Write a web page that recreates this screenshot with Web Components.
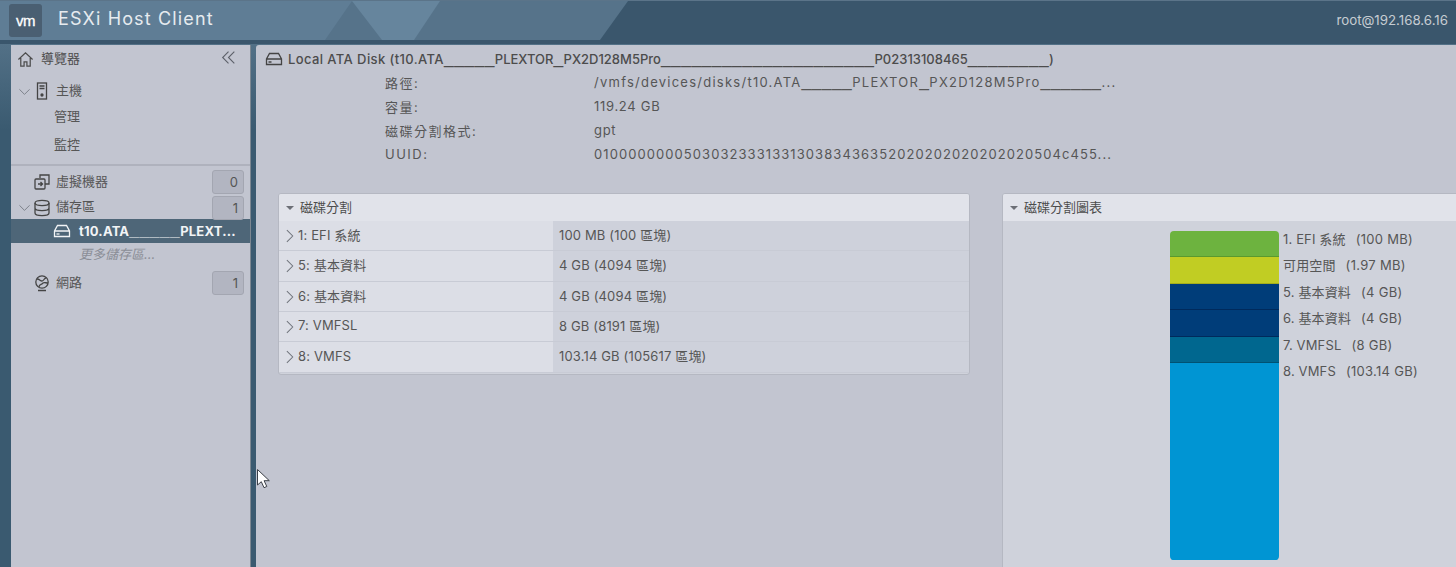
<!DOCTYPE html>
<html lang="zh-Hant">

<head>
  <meta charset="UTF-8">
  <title>ESXi Host Client</title>
  <style>
    html, body { margin: 0; height: 100%; overflow: hidden; background: #3a566c; }
    body { font-family: Inter, "Noto Sans CJK TC", sans-serif; font-size: 13px; color: #565656; }
  </style>
</head>

<body>
  <esxi-app>
    <esxi-header slot="header" user="root@192.168.6.16"></esxi-header>
    <esxi-navigator slot="nav"></esxi-navigator>
    <esxi-disk-view slot="main"></esxi-disk-view>
  </esxi-app>

  <script>
    const icons = {
      home: '<path d="M1.5 9 9 2l7.5 7M4 7.5V16h3.5v-4.5h3V16H14V7.5" />',
      host: '<rect x="4.5" y="1" width="9" height="16" /><path d="M6.5 4h5M6.5 6.5h5" /><circle cx="9" cy="13" r="1" fill="currentColor" />',
      vm: '<path d="M7 5V2h9v9h-4" /><rect x="2" y="6" width="10" height="10" rx="1" /><path d="M5 11h4M7.5 9l2 2-2 2" />',
      store: '<ellipse cx="9" cy="4" rx="7" ry="2.6" /><path d="M2 4v10c0 1.5 3 2.6 7 2.6s7-1.1 7-2.6V4M2 9c0 1.5 3 2.6 7 2.6s7-1.1 7-2.6" />',
      net: '<circle cx="9" cy="8" r="6.2" /><path d="M4 5c3 0 3 2 5 2s2-3 4-3M6 13c0-3 3-2 4-4 1-1 3 0 5 0M5 16.5h8" />',
      disk: '<path d="M4.5 3.5h9L16.5 9v5.5h-15V9zM1.500 9h15" /><path d="M3.500 12h3" />',
      chevDown: '<path d="M2 6l7 7 7-7" />',
      chevRight: '<path d="M5 1.500 12.500 9 5 16.500" />',
      collapse: '<path d="M9 2 2 9l7 7M16 2 9 9l7 7" />'
    };

    // the reference font draws "_" much wider than Inter does
    const wide = (text) => text.replace(/_+/g, (m) => `<span class="us">${m}</span>`);
    const wideCss = '.us { font-family: "Liberation Sans", sans-serif; font-size: 17.400px; line-height: 0; letter-spacing: .5px; }';

    class EsxiIcon extends HTMLElement {
      connectedCallback() {
        const size = this.getAttribute('size') || 18;
        const root = this.attachShadow({ mode: 'open' });
        root.innerHTML = `
          <style>
            :host { display: inline-flex; flex: none; width: ${size}px; height: ${size}px; color: inherit; }
            svg { width: 100%; height: 100%; fill: none; stroke: currentColor; stroke-width: 1.3; }
          </style>
          <svg viewBox="0 0 18 18">${icons[this.getAttribute('name')] || ''}</svg>`;
      }
    }
    customElements.define('esxi-icon', EsxiIcon);

    class EsxiApp extends HTMLElement {
      constructor() {
        super();
        this.attachShadow({ mode: 'open' }).innerHTML = `
          <style>
            :host {
              display: grid;
              position: relative;
              width: 1456px;
              height: 567px;
              overflow: hidden;
              grid-template-columns: 11px 240px 1fr;
              grid-template-rows: 44px 1fr;
              background: linear-gradient(180deg, #5f7c92 0, #3a5a70 130px);
            }
            .head { grid-column: 1 / -1; }
            .nav { grid-column: 2; }
            .main { grid-column: 3; margin-left: 5px; min-width: 0; }
            .cursor { position: absolute; left: 257px; top: 469px; width: 15px; height: 22px; }
          </style>
          <div class="head"><slot name="header"></slot></div>
          <div class="nav"><slot name="nav"></slot></div>
          <div class="main"><slot name="main"></slot></div>
          <svg class="cursor" viewBox="0 0 15 22">
            <path d="M.5.500v15.500l3.800-3.300 2.700 6 2.800-1.200-2.700-5.800h5.200z" fill="#fff" stroke="#3a3f46" stroke-width="1" />
          </svg>`;
      }
    }
    customElements.define('esxi-app', EsxiApp);

    class EsxiHeader extends HTMLElement {
      connectedCallback() {
        this.attachShadow({ mode: 'open' }).innerHTML = `
          <style>
            :host {
              display: flex;
              position: relative;
              align-items: center;
              height: 44px;
              box-sizing: border-box;
              padding: 0 8px 0 9px;
              background: #3a566c;
              border-top: 1px solid #5b7489;
              overflow: hidden;
            }
            .deco { position: absolute; left: 0; top: 0; width: 640px; height: 44px; }
            .logo {
              position: relative;
              width: 33px; height: 33px;
              margin-top: -5px;
              display: flex; align-items: center; justify-content: center;
              background: #4a5f72;
              border-radius: 3px;
              color: #fff;
              font: 400 15px/1 "Liberation Sans", sans-serif;
              letter-spacing: -0.5px;
              -webkit-text-stroke: 0.3px #fff;
            }
            .title {
              position: relative;
              margin: -8px 0 0 16px;
              color: #e6ebef;
              font: 400 18px/1 Inter, sans-serif;
              letter-spacing: 1.15px;
            }
            .user { position: relative; margin: -6px 0 0 auto; color: #c6ccd2; font-size: 13.300px; }
          </style>
          <svg class="deco" viewBox="0 0 640 44">
            <polygon points="0,0 628,0 600,39 0,39" fill="#56738a" />
            <polygon points="0,0 352,0 325,39 0,39" fill="#5f7d95" />
            <polygon points="352,0 440,0 414,39 382,39" fill="#66859d" />
          </svg>
          <div class="logo">vm</div>
          <div class="title">ESXi Host Client</div>
          <div class="user">${this.getAttribute('user')}</div>`;
      }
    }
    customElements.define('esxi-header', EsxiHeader);

    class NavRow extends HTMLElement {
      connectedCallback() {
        const expand = this.hasAttribute('expand');
        const icon = this.getAttribute('icon');
        const count = this.getAttribute('count');
        this.attachShadow({ mode: 'open' }).innerHTML = `
          <style>
            :host {
              display: flex;
              align-items: center;
              height: 24px;
              padding-left: 7px;
              padding-right: 6px;
              color: #565656;
              font-size: 13px;
            }
            .arrow { width: 15px; flex: none; display: flex; color: #777d85; }
            .icon { margin-right: 5px; display: flex; color: #444; }
            .label { flex: 1; white-space: nowrap; padding-bottom: 4px; }
            .count {
              width: 32px; height: 24px; box-sizing: border-box;
              padding-right: 5px;
              display: flex; align-items: center; justify-content: flex-end;
              background: #b2b5c1;
              border: 1px solid #a3a6b1;
              border-radius: 3px;
              color: #555;
              font-size: 13px;
            }
          </style>
          <span class="arrow">${expand ? '<esxi-icon name="chevDown" size="13"></esxi-icon>' : ''}</span>
          ${icon ? `<span class="icon"><esxi-icon name="${icon}" size="18"></esxi-icon></span>` : ''}
          <span class="label"><slot></slot></span>
          ${count !== null ? `<span class="count">${count}</span>` : ''}`;
      }
    }
    customElements.define('nav-row', NavRow);

    class EsxiNavigator extends HTMLElement {
      connectedCallback() {
        this.attachShadow({ mode: 'open' }).innerHTML = `
          <style>
            :host {
              display: block;
              height: 100%;
              margin-top: 1px;
              background: #c2c5d0;
              border-right: 1px solid #7c8791;
              font-size: 13px;
            }
            .top {
              display: flex; align-items: center;
              height: 28px;
              padding: 0 14px 0 6px;
              color: #4c4c4c;
            }
            .top span { flex: 1; margin-left: 7px; padding-bottom: 4px; }
            .top .side { color: #5c6069; flex: none; margin-top: -3px; }
            nav-row.first { margin-top: 6px; }
            .sub { height: 24px; line-height: 24px; padding-left: 43px; color: #565656; }
            .sub.last { margin-top: 4px; }
            hr { margin: 8px 0 4px; border: 0; height: 2px; background: #afb2bd; }
            .selected {
              display: flex; align-items: center;
              height: 24px;
              padding-left: 42px;
              background: #4e6678;
              color: #f2f4f6;
              font-weight: 700;
            }
            .selected > span { margin-left: 8px; white-space: nowrap; padding-bottom: 1px; letter-spacing: .2px; }
            ${wideCss}
            .more { height: 23px; line-height: 23px; padding-left: 68px; color: #8b8e97; font-style: italic; }
            .net { margin-top: 5px; }
            .gap { margin-top: 2px; }
          </style>
          <div class="top">
            <esxi-icon name="home" size="17"></esxi-icon><span>導覽器</span>
            <esxi-icon class="side" name="collapse" size="15"></esxi-icon>
          </div>
          <nav-row class="first" expand icon="host">主機</nav-row>
          <div class="sub" style="margin-top:1px">管理</div>
          <div class="sub last">監控</div>
          <hr>
          <nav-row icon="vm" count="0">虛擬機器</nav-row>
          <nav-row class="gap" expand icon="store" count="1" style="height:23px">儲存區</nav-row>
          <div class="selected"><esxi-icon name="disk" size="18"></esxi-icon><span>${wide('t10.ATA_____PLEXT...')}</span></div>
          <div class="more">更多儲存區...</div>
          <nav-row class="net" icon="net" count="1">網路</nav-row>`;
      }
    }
    customElements.define('esxi-navigator', EsxiNavigator);

    class EsxiPortlet extends HTMLElement {
      connectedCallback() {
        this.attachShadow({ mode: 'open' }).innerHTML = `
          <style>
            :host {
              display: block;
              box-sizing: border-box;
              background: #cfd2db;
              border: 1px solid #b5b8c2;
              border-radius: 3px;
              overflow: hidden;
            }
            .bar {
              display: flex; align-items: center;
              height: 27px;
              padding-left: 7px;
              background: #e1e3ea;
              color: #4c4c4c;
            }
            .bar span:last-child { padding-bottom: 3px; }
            .tri { width: 0; height: 0; margin-right: 6px; border: 4px solid transparent; border-top: 4px solid #6c6f76; border-bottom: 0; }
          </style>
          <div class="bar"><span class="tri"></span><span>${this.getAttribute('heading')}</span></div>
          <slot></slot>`;
      }
    }
    customElements.define('esxi-portlet', EsxiPortlet);

    class PartitionTable extends HTMLElement {
      connectedCallback() {
        const rows = [
          ['1: EFI 系統', '100 MB (100 區塊)', 30],
          ['5: 基本資料', '4 GB (4094 區塊)', 31],
          ['6: 基本資料', '4 GB (4094 區塊)', 30],
          ['7: VMFSL', '8 GB (8191 區塊)', 30],
          ['8: VMFS', '103.14 GB (105617 區塊)', 31]
        ];
        this.attachShadow({ mode: 'open' }).innerHTML = `
          <style>
            :host { display: block; }
            .row {
              display: grid;
              grid-template-columns: 274px 1fr;
              box-sizing: border-box;
              border-bottom: 1px solid #c8cbd5;
            }
            .row:last-child { margin-bottom: 1px; }
            .a, .b { display: flex; align-items: center; }
            .a { background: #dcdee6; padding-left: 4px; color: #565656; }
            .a esxi-icon { color: #70747c; margin-right: 1px; }
            .a span, .b span { padding-bottom: 3px; letter-spacing: .15px; }
            .b { background: #ced1db; padding-left: 6px; }
          </style>
          ${rows.map(([name, size, h]) => `
            <div class="row" style="height:${h}px">
              <div class="a"><esxi-icon name="chevRight" size="14"></esxi-icon><span>${name}</span></div>
              <div class="b"><span>${size}</span></div>
            </div>`).join('')}`;
      }
    }
    customElements.define('partition-table', PartitionTable);

    class PartitionChart extends HTMLElement {
      connectedCallback() {
        const parts = [
          ['1. EFI 系統', '(100 MB)', '#6db33f', '#5a9a2e', 26.4],
          ['可用空間', '(1.97 MB)', '#c1cd23', '#a5ae1c', 26.4],
          ['5. 基本資料', '(4 GB)', '#003d79', '#002a5c', 26.4],
          ['6. 基本資料', '(4 GB)', '#003d79', '#002a5c', 26.4],
          ['7. VMFSL', '(8 GB)', '#00678f', '#005273', 26.4],
          ['8. VMFS', '(103.14 GB)', '#0095d3', '#0095d3', 197]
        ];
        this.attachShadow({ mode: 'open' }).innerHTML = `
          <style>
            :host { display: flex; align-items: flex-start; padding: 10px 0 0 167px; height: 350px; box-sizing: border-box; }
            .bar { width: 109px; flex: none; border-radius: 4px; overflow: hidden; }
            .seg { box-sizing: border-box; border-bottom: 1.500px solid; }
            .labels { margin: -1px 0 0 4px; white-space: nowrap; }
            .labels div { height: 26.400px; line-height: 18px; color: #565656; font-size: 13px; letter-spacing: .15px; }
            .labels span { margin-left: 10px; letter-spacing: .3px; }
          </style>
          <div class="bar">
            ${parts.map(p => `<div class="seg" style="height:${p[4]}px;background:${p[2]};border-color:${p[3]}"></div>`).join('')}
          </div>
          <div class="labels">
            ${parts.map(p => `<div>${p[0]}<span>${p[1]}</span></div>`).join('')}
          </div>`;
      }
    }
    customElements.define('partition-chart', PartitionChart);

    class EsxiDiskView extends HTMLElement {
      connectedCallback() {
        const details = [
          ['路徑:', '/vmfs/devices/disks/t10.ATA_____PLEXTOR_PX2D128M5Pro______...', '1.25px'],
          ['容量:', '119.24 GB', '.7px'],
          ['磁碟分割格式:', 'gpt', '.7px'],
          ['UUID:', '0100000000503032333133130383436352020202020202020504c455...', '1.07px']
        ];
        this.attachShadow({ mode: 'open' }).innerHTML = `
          <style>
            :host {
              display: block;
              height: 523px;
              margin-top: 1px;
              background: #c2c5d0;
              border-radius: 3px 0 0 0;
              overflow: hidden;
            }
            .title {
              display: flex; align-items: center;
              height: 28px;
              padding-left: 9px;
              color: #4c4c4c;
              font-weight: 500;
              white-space: nowrap;
            }
            .title esxi-icon { margin-right: 5px; color: #444; }
            .title b { font-weight: 500; letter-spacing: .4px; }
            ${wideCss}
            .details {
              display: grid;
              grid-template-columns: 209px 522px;
              grid-auto-rows: 24px;
              margin: -3px 0 0 129px;
              align-items: center;
            }
            .key { letter-spacing: 1.500px; }
            .value { white-space: nowrap; }
            .panels {
              display: grid;
              grid-template-columns: 692px 470px;
              column-gap: 32px;
              align-items: start;
              margin: 27px 0 0 22px;
            }
          </style>
          <div class="title"><esxi-icon name="disk" size="18"></esxi-icon><span><b>Local ATA Disk (t10.ATA</b>${wide('_____PLEXTOR_PX2D128M5Pro_____________________P02313108465________')})</span></div>
          <div class="details">
            ${details.map(([k, v, ls]) => `<div class="key">${k}</div><div class="value" style="letter-spacing:${ls}">${wide(v)}</div>`).join('')}
          </div>
          <div class="panels">
            <esxi-portlet heading="磁碟分割"><partition-table></partition-table></esxi-portlet>
            <esxi-portlet heading="磁碟分割圖表"><partition-chart></partition-chart></esxi-portlet>
          </div>`;
      }
    }
    customElements.define('esxi-disk-view', EsxiDiskView);
  </script>
</body>

</html>
